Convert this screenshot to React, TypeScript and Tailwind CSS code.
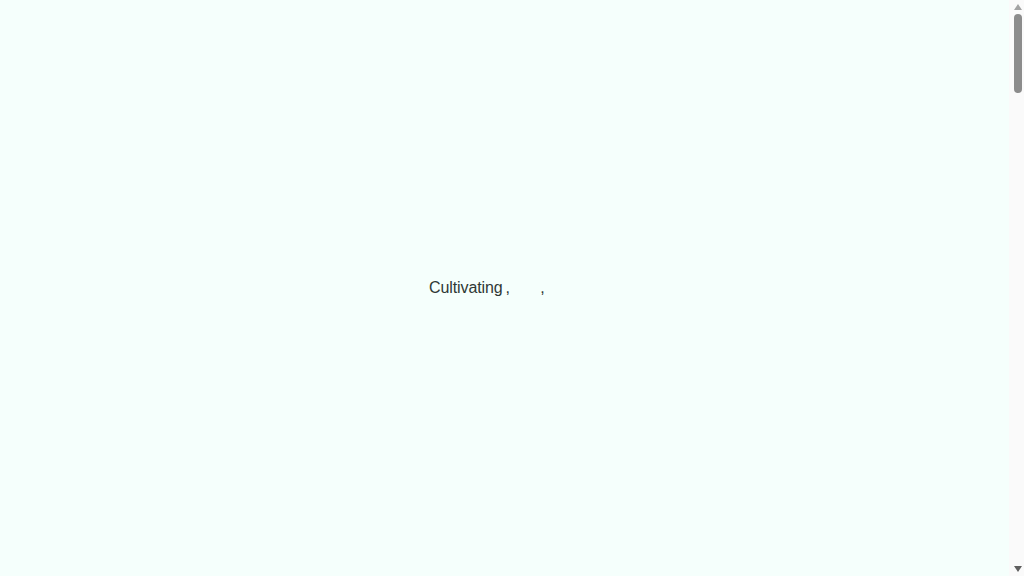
import React from 'react';

// Static look of the classic scrollbar seen in the screenshot
const Scrollbar: React.FC = () => (
  <aside className="w-[15px] h-screen bg-[#fafafa] flex flex-col items-center pt-[4px] pb-[4px] pl-[2px]">
    <svg width="8" height="6" viewBox="0 0 8 6" className="shrink-0">
      <path d="M4 0 L8 6 L0 6 Z" fill="#a3a3a3" />
    </svg>
    <div className="mt-[4px] w-[8px] h-[79px] rounded-full bg-[#8c8c8c]" />
    <div className="flex-1" />
    <svg width="8" height="6" viewBox="0 0 8 6" className="shrink-0">
      <path d="M0 0 L8 0 L4 6 Z" fill="#5f5f5f" />
    </svg>
  </aside>
);

const App: React.FC = () => {
  return (
    <div className="h-screen flex overflow-hidden bg-[#f5fffc] font-['Liberation_Sans',Arial,sans-serif]">
      <main className="flex-1 flex items-center justify-center">
        <p className="text-[16px] leading-6 text-[#2f3835] whitespace-pre tracking-[-0.1px]">
          <span>Cultivating</span>
          <span className="inline-block w-[3px]" />
          <span>, </span>
          <span className="inline-block w-[26px] opacity-0" />
          <span>, </span>
          <span className="inline-block w-[31px] opacity-0" />
        </p>
      </main>
      <Scrollbar />
    </div>
  );
};

export default App;
